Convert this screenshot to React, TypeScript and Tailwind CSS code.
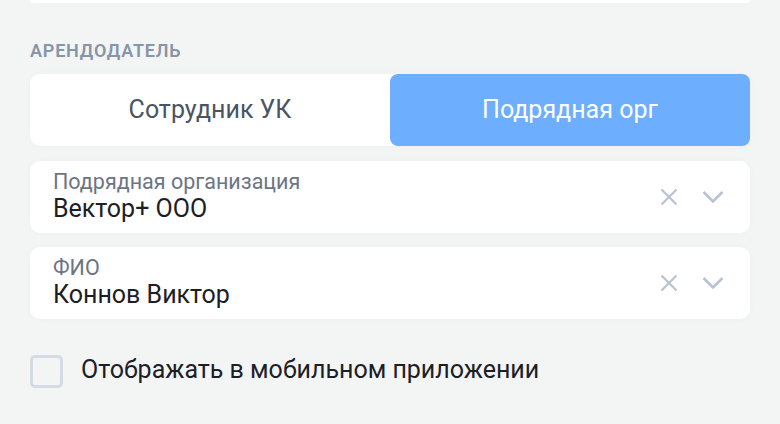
import { useState } from 'react'

// Форма выбора арендодателя: переключатель + два поля-селекта + чекбокс.
const font = { fontFamily: 'Roboto, "Noto Sans", sans-serif' }

function ClearIcon() {
  return (
    <svg width="18" height="18" viewBox="0 0 18 18" fill="none" stroke="#b7c3d3" strokeWidth="2.2">
      <path d="M1.5 1.5l15 15M16.5 1.5l-15 15" />
    </svg>
  )
}

function ChevronIcon() {
  return (
    <svg width="22" height="14" viewBox="0 0 22 14" fill="none" stroke="#b7c3d3" strokeWidth="2.6">
      <path d="M1.5 2l9.5 9.5L20.5 2" />
    </svg>
  )
}

function SelectField({ label, value }: { label: string; value: string }) {
  return (
    <div className="flex h-[72px] items-center rounded-[10px] bg-white pl-[23px] pr-[26px] shadow-[0_0_10px_rgba(0,0,0,0.025)]">
      <div className="flex-1">
        <div className="text-[21.5px] leading-[24px] text-[#6b7583]">{label}</div>
        <div className="text-[25px] leading-[30px] text-[#1c2026]">{value}</div>
      </div>
      <div className="flex items-center gap-[24px]">
        <ClearIcon />
        <ChevronIcon />
      </div>
    </div>
  )
}

export default function App() {
  const [mode, setMode] = useState<'uk' | 'org'>('org')
  const [mobile, setMobile] = useState(false)

  return (
    <div className="h-[424px] w-[780px] overflow-hidden bg-[#f3f4f4] px-[30px]" style={font}>
      <div className="h-[3px] rounded-b-[10px] bg-white shadow-[0_0_10px_rgba(0,0,0,0.03)]" />

      <div className="mt-[37px] text-[18px] font-semibold leading-[22px] tracking-[0.8px] text-[#8795a8]">
        АРЕНДОДАТЕЛЬ
      </div>

      <div className="mt-[12px] flex h-[72px] rounded-[10px] bg-white shadow-[0_0_10px_rgba(0,0,0,0.025)]">
        <button
          onClick={() => setMode('uk')}
          className={`flex-1 rounded-[8px] text-[25px] ${mode === 'uk' ? 'bg-[#6daeff] text-white' : 'text-[#4a5463]'}`}
        >
          Сотрудник УК
        </button>
        <button
          onClick={() => setMode('org')}
          className={`flex-1 rounded-[8px] text-[25px] ${mode === 'org' ? 'bg-[#6daeff] text-white' : 'text-[#4a5463]'}`}
        >
          Подрядная орг
        </button>
      </div>

      <div className="mt-[15px] flex flex-col gap-[14px]">
        <SelectField label="Подрядная организация" value="Вектор+ ООО" />
        <SelectField label="ФИО" value="Коннов Виктор" />
      </div>

      <label className="mt-[35px] flex cursor-pointer items-center gap-[18px]">
        <span
          onClick={() => setMobile(!mobile)}
          className={`h-[33px] w-[33px] rounded-[5px] border-[3px] border-[#d3dbe5] ${mobile ? 'bg-[#6daeff]' : 'bg-transparent'}`}
        />
        <span className="-mt-[3px] text-[25px] text-[#1c2026]">Отображать в мобильном приложении</span>
      </label>
    </div>
  )
}
